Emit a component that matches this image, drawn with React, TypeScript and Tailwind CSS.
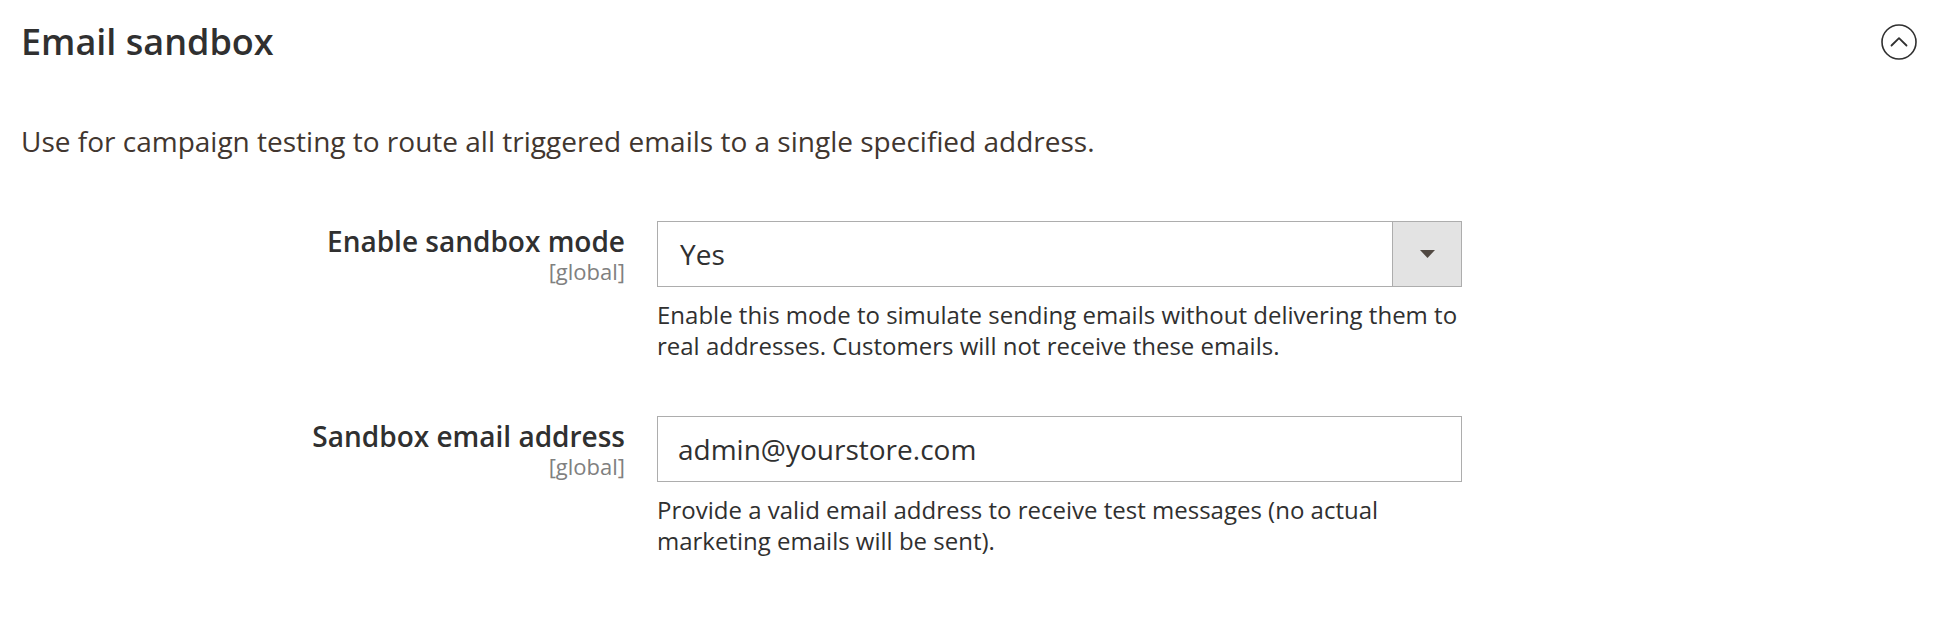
import React from "react";

function ChevronCircle() {
  return (
    <svg width="36" height="36" viewBox="0 0 36 36" fill="none" className="block">
      <circle cx="18" cy="18" r="17" stroke="#303030" strokeWidth="1.6" />
      <polyline points="10.5,21.5 18,14.2 25.5,21.5" stroke="#303030" strokeWidth="1.8" fill="none" strokeLinecap="round" strokeLinejoin="round" />
    </svg>
  );
}

function Label({ title }: { title: string }) {
  return (
    <div className="flex flex-col items-end pt-[3px] text-right">
      <div className="text-[28px] leading-[34px] font-semibold text-[#303030]">{title}</div>
      <div className="text-[22px] leading-[27px] text-[#808080]">[global]</div>
    </div>
  );
}

export default function App() {
  return (
    <div className="w-[1934px] h-[618px] bg-white px-[21px] pt-[22px]" style={{ fontFamily: '"Open Sans", "Noto Sans", sans-serif' }}>
      <div className="flex items-start justify-between">
        <h2 className="text-[36px] leading-[40px] font-semibold text-[#303030]">Email sandbox</h2>
        <div className="mt-[2px] mr-[-4px]">
          <ChevronCircle />
        </div>
      </div>

      <p className="mt-[60px] text-[28px] leading-[38px] text-[#41362f]">
        Use for campaign testing to route all triggered emails to a single specified address.
      </p>

      <div className="mt-[61px] grid grid-cols-[604px_805px] gap-x-[32px]">
        <Label title="Enable sandbox mode" />
        <div>
          <div className="flex h-[66px] border border-[#adadad] bg-white">
            <div className="flex flex-1 items-center pl-[22px] text-[28px] text-[#303030]">Yes</div>
            <div className="flex w-[69px] items-center justify-center border-l border-[#adadad] bg-[#e3e3e3]">
              <svg width="15" height="8" viewBox="0 0 15 8" className="block">
                <polygon points="0,0 15,0 7.5,8" fill="#514943" />
              </svg>
            </div>
          </div>
          <div className="mt-[12px] text-[24px] leading-[31px] text-[#303030]">
            <div className="whitespace-nowrap">Enable this mode to simulate sending emails without delivering them to</div>
            <div className="whitespace-nowrap">real addresses. Customers will not receive these emails.</div>
          </div>
        </div>
      </div>

      <div className="mt-[55px] grid grid-cols-[604px_805px] gap-x-[32px]">
        <Label title="Sandbox email address" />
        <div>
          <div className="flex h-[66px] items-center border border-[#adadad] bg-white pl-[20px] text-[28px] text-[#303030]">
            admin@yourstore.com
          </div>
          <div className="mt-[12px] text-[24px] leading-[31px] text-[#303030]">
            <div className="whitespace-nowrap">Provide a valid email address to receive test messages (no actual</div>
            <div className="whitespace-nowrap">marketing emails will be sent).</div>
          </div>
        </div>
      </div>
    </div>
  );
}
